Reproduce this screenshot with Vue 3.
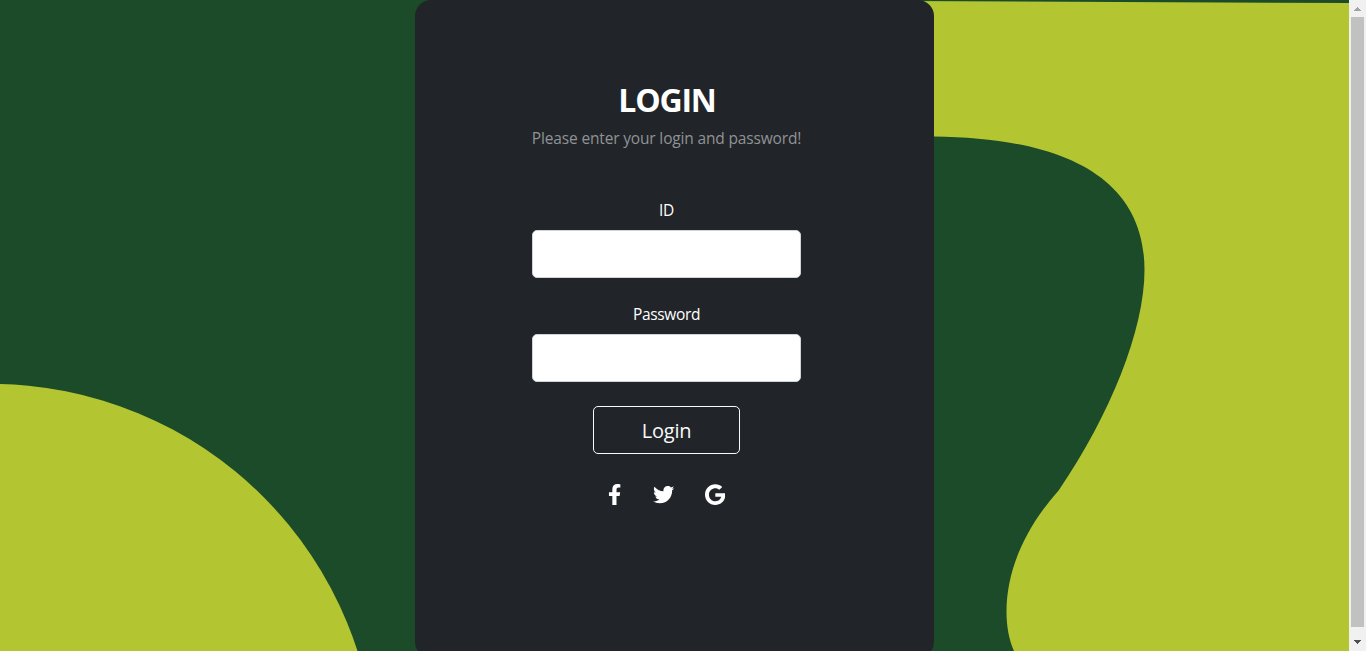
<script setup>
import { ref } from 'vue'

const id = ref('')
const password = ref('')

const socials = [
  {
    name: 'facebook',
    box: '0 0 320 512',
    path: 'M279.14 288l14.22-92.66h-88.91v-60.13c0-25.35 12.42-50.06 52.24-50.06h40.42V6.26S260.43 0 225.36 0c-73.22 0-121.08 44.38-121.08 124.72v70.62H22.89V288h81.39v224h100.17V288z'
  },
  {
    name: 'twitter',
    box: '0 0 512 512',
    path: 'M459.37 151.716c.325 4.548.325 9.097.325 13.645 0 138.72-105.583 298.558-298.558 298.558-59.452 0-114.68-17.219-161.137-47.106 8.447.974 16.568 1.299 25.34 1.299 49.055 0 94.213-16.568 130.274-44.832-46.132-.975-84.792-31.188-98.112-72.772 6.498.974 12.995 1.624 19.818 1.624 9.421 0 18.843-1.3 27.614-3.573-48.081-9.747-84.143-51.98-84.143-102.985v-1.299c13.969 7.797 30.214 12.67 47.431 13.319-28.264-18.843-46.781-51.005-46.781-87.391 0-19.492 5.197-37.36 14.294-52.954 51.655 63.675 129.3 105.258 216.365 109.807-1.624-7.797-2.599-15.918-2.599-24.04 0-57.828 46.782-104.934 104.934-104.934 30.213 0 57.502 12.67 76.67 33.137 23.715-4.548 46.456-13.32 66.599-25.34-7.798 24.366-24.366 44.833-46.132 57.827 21.117-2.273 41.584-8.122 60.426-16.243-14.292 20.791-32.161 39.308-52.628 54.253z'
  },
  {
    name: 'google',
    box: '0 0 488 512',
    path: 'M488 261.8C488 403.3 391.1 504 248 504 110.8 504 0 393.2 0 256S110.8 8 248 8c66.8 0 123 24.5 166.3 64.9l-67.5 64.9C258.5 52.6 94.3 116.6 94.3 256c0 86.5 69.1 156.6 153.7 156.6 98.2 0 135-70.4 140.8-106.9H248v-85.3h236.1c2.3 12.7 3.9 24.9 3.9 41.4z'
  }
]
</script>

<template>
  <div class="page">
    <main class="viewport">
      <svg class="backdrop" viewBox="0 0 1349 651" aria-hidden="true">
        <circle cx="-9.5" cy="769.5" r="385.7" />
        <path d="M900 1L1349 3V651H1014C1009 640 1006.5 626 1006.5 612C1006.5 570 1025 528 1059 490C1110 415 1144.5 330 1144.5 270C1144.5 175 1060 138 934 136.5H900Z" />
      </svg>
      <section class="card">
        <form class="form" @submit.prevent>
          <h2 class="title">LOGIN</h2>
          <p class="hint">Please enter your login and password!</p>
          <label class="label" for="id">ID</label>
          <input id="id" v-model="id" class="input" type="text" />
          <label class="label" for="password">Password</label>
          <input id="password" v-model="password" class="input" type="password" />
          <button class="submit" type="submit">Login</button>
          <div class="socials">
            <a v-for="s in socials" :key="s.name" :class="s.name">
              <svg :viewBox="s.box"><path :d="s.path" /></svg>
            </a>
          </div>
        </form>
      </section>
    </main>
    <div class="scrollbar">
      <svg viewBox="0 0 17 17"><path fill="#a3a3a3" d="M8 7h1v1h1v1h1v1h1v1H5v-1h1V9h1V8h1z" /></svg>
      <div class="thumb"></div>
      <svg viewBox="0 0 17 17"><path fill="#505050" d="M5 6h7v1h-1v1h-1v1H9v1H8V9H7V8H6V7H5z" /></svg>
    </div>
  </div>
</template>

<style>
body {
  margin: 0;
  overflow: hidden;
}
</style>

<style scoped>
.page {
  display: flex;
  height: 651px;
  overflow: hidden;
  font-family: "Open Sans", "Noto Sans", sans-serif;
  color: #fff;
}
.viewport {
  position: relative;
  flex: 1;
  height: 651px;
  overflow: hidden;
  background: #1b4b29;
}
.backdrop {
  position: absolute;
  inset: 0;
  width: 1349px;
  height: 651px;
  fill: #b3c631;
}
.card {
  position: relative;
  box-sizing: border-box;
  width: 519px;
  height: 658px;
  margin-left: 415px;
  padding: 80px 133px 0 117px;
  border-radius: 16px;
  background: #212529;
}
.form {
  display: flex;
  flex-direction: column;
  align-items: center;
}
.title {
  margin: 0 -1px 7px 0;
  font-size: 32px;
  font-weight: 700;
  line-height: 39px;
  letter-spacing: -1.2px;
  white-space: nowrap;
}
.hint {
  margin: 0 0 48px;
  font-size: 15.5px;
  line-height: 24px;
  letter-spacing: -0.16px;
  white-space: nowrap;
  color: #909294;
}
.label {
  margin-bottom: 8px;
  font-size: 15.5px;
  line-height: 24px;
  letter-spacing: -0.35px;
}
.input {
  box-sizing: border-box;
  width: 269px;
  height: 48px;
  margin: 0 0 24px;
  padding: 8px 16px;
  border: 1px solid #ced4da;
  border-radius: 5px;
  background: #fff;
  font: inherit;
  outline: none;
}
.submit {
  box-sizing: border-box;
  width: 147px;
  height: 48px;
  padding: 2px 0 0;
  border: 1px solid #f8f9fa;
  border-radius: 5px;
  background: transparent;
  color: #f8f9fa;
  font-family: inherit;
  font-size: 20px;
  line-height: 44px;
  letter-spacing: -0.2px;
}
.socials {
  display: flex;
  align-items: center;
  gap: 31px;
  margin-top: 30px;
}
.socials a {
  display: flex;
  height: 21.3px;
}
.socials svg {
  height: 21.3px;
  fill: #fff;
}
.socials .twitter {
  margin: 0 -0.7px 0 0.7px;
}
.scrollbar {
  display: flex;
  flex-direction: column;
  align-items: center;
  width: 17px;
  background: #f1f1f1;
}
.scrollbar svg {
  width: 17px;
  height: 17px;
}
.thumb {
  width: 13px;
  height: 610px;
  margin-bottom: 7px;
  background: #c1c1c1;
}
</style>
